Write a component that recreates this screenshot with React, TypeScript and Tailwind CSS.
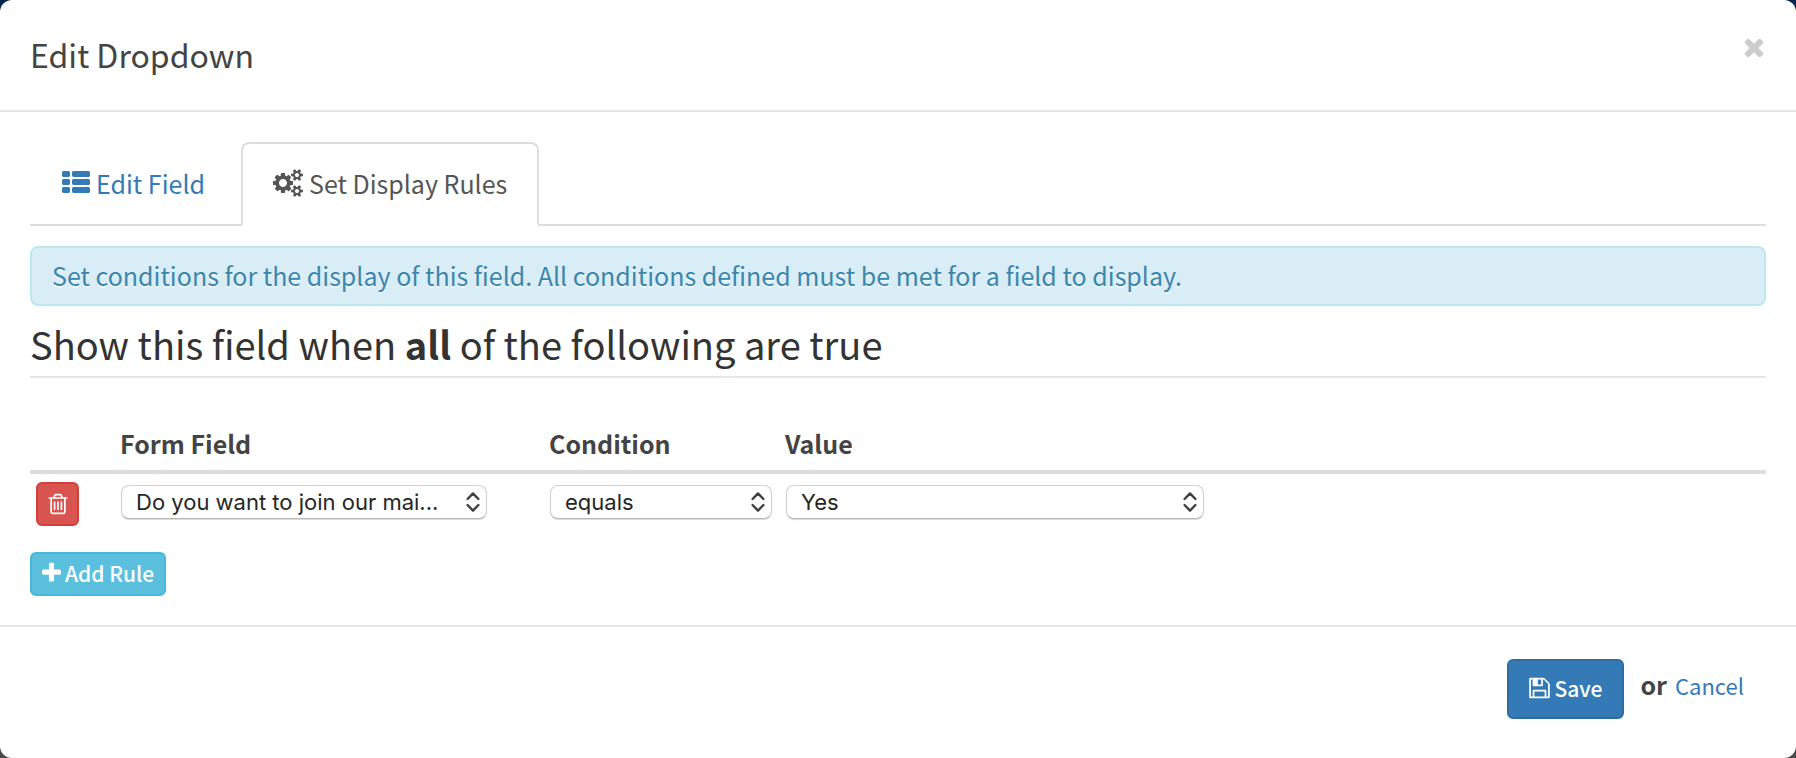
import { useState, type ReactNode } from "react";

type IconProps = {
  path: string;
  className: string;
  viewBox?: string;
};

const ICONS = {
  list: "M512 1248v192q0 40-28 68t-68 28h-320q-40 0-68-28t-28-68v-192q0-40 28-68t68-28h320q40 0 68 28t28 68zm0-512v192q0 40-28 68t-68 28h-320q-40 0-68-28t-28-68v-192q0-40 28-68t68-28h320q40 0 68 28t28 68zm1280 512v192q0 40-28 68t-68 28h-960q-40 0-68-28t-28-68v-192q0-40 28-68t68-28h960q40 0 68 28t28 68zm-1280-1024v192q0 40-28 68t-68 28h-320q-40 0-68-28t-28-68v-192q0-40 28-68t68-28h320q40 0 68 28t28 68zm1280 512v192q0 40-28 68t-68 28h-960q-40 0-68-28t-28-68v-192q0-40 28-68t68-28h960q40 0 68 28t28 68zm0-512v192q0 40-28 68t-68 28h-960q-40 0-68-28t-28-68v-192q0-40 28-68t68-28h960q40 0 68 28t28 68z",
  cogs: "M896 896q0-106-75-181t-181-75-181 75-75 181 75 181 181 75 181-75 75-181zm768 512q0-52-38-90t-90-38-90 38-38 90q0 53 37.5 90.5t90.5 37.5 90.5-37.5 37.5-90.5zm0-1024q0-52-38-90t-90-38-90 38-38 90q0 53 37.5 90.5t90.5 37.5 90.5-37.5 37.5-90.5zm-384 421v185q0 10-7 19.5t-16 10.5l-155 24q-11 35-32 76 34 48 90 115 7 11 7 20 0 12-7 19-23 30-82.5 89.5t-78.5 59.5q-11 0-21-7l-115-90q-37 19-77 31-11 108-23 155-7 24-30 24h-186q-11 0-20-7.5t-10-17.5l-23-153q-34-10-75-31l-118 89q-7 7-20 7-11 0-21-8-144-133-144-160 0-9 7-19 10-14 41-53t47-61q-23-44-35-82l-152-24q-10-1-17-9.5t-7-19.5v-185q0-10 7-19.5t16-10.5l155-24q11-35 32-76-34-48-90-115-7-11-7-20 0-12 7-20 22-30 82-89t79-59q11 0 21 7l115 90q34-18 77-32 11-108 23-154 7-24 30-24h186q11 0 20 7.5t10 17.5l23 153q34 10 75 31l118-89q8-7 20-7 11 0 21 8 144 133 144 160 0 8-7 19-12 16-42 54t-45 60q23 48 34 82l152 23q10 2 17 10.5t7 19.5zm640 533v140q0 16-149 31-12 27-30 52 51 113 51 138 0 4-4 7-122 71-124 71-8 0-46-47t-52-68q-20 2-30 2t-30-2q-14 21-52 68t-46 47q-2 0-124-71-4-3-4-7 0-25 51-138-18-25-30-52-149-15-149-31v-140q0-16 149-31 13-29 30-52-51-113-51-138 0-4 4-7 4-2 35-20t59-34 30-16q8 0 46 46.5t52 67.5q20-2 30-2t30 2q51-71 92-112l6-2q4 0 124 70 4 3 4 7 0 25-51 138 17 23 30 52 149 15 149 31zm0-1024v140q0 16-149 31-12 27-30 52 51 113 51 138 0 4-4 7-122 71-124 71-8 0-46-47t-52-68q-20 2-30 2t-30-2q-14 21-52 68t-46 47q-2 0-124-71-4-3-4-7 0-25 51-138-18-25-30-52-149-15-149-31v-140q0-16 149-31 13-29 30-52-51-113-51-138 0-4 4-7 4-2 35-20t59-34 30-16q8 0 46 46.5t52 67.5q20-2 30-2t30 2q51-71 92-112l6-2q4 0 124 70 4 3 4 7 0 25-51 138 17 23 30 52 149 15 149 31z",
  trash: "M704 736v576q0 14-9 23t-23 9h-64q-14 0-23-9t-9-23v-576q0-14 9-23t23-9h64q14 0 23 9t9 23zm256 0v576q0 14-9 23t-23 9h-64q-14 0-23-9t-9-23v-576q0-14 9-23t23-9h64q14 0 23 9t9 23zm256 0v576q0 14-9 23t-23 9h-64q-14 0-23-9t-9-23v-576q0-14 9-23t23-9h64q14 0 23 9t9 23zm128 724v-948h-896v948q0 22 7 40.5t14.5 27 10.5 8.5h832q3 0 10.5-8.5t14.5-27 7-40.5zm-672-1076h448l-48-117q-7-9-17-11h-317q-10 2-17 11zm928 32v64q0 14-9 23t-23 9h-96v948q0 83-47 143.5t-113 60.5h-832q-66 0-113-58.5t-47-141.5v-952h-96q-14 0-23-9t-9-23v-64q0-14 9-23t23-9h309l70-167q15-37 54-63t79-26h320q40 0 79 26t54 63l70 167h309q14 0 23 9t9 23z",
  plus: "M1600 736v192q0 40-28 68t-68 28h-416v416q0 40-28 68t-68 28h-192q-40 0-68-28t-28-68v-416h-416q-40 0-68-28t-28-68v-192q0-40 28-68t68-28h416v-416q0-40 28-68t68-28h192q40 0 68 28t28 68v416h416q40 0 68 28t28 68z",
  save: "M512 1536h768v-384h-768v384zm896 0h128v-896q0-14-10-38.5t-20-34.5l-281-281q-10-10-34-20t-39-10v416q0 40-28 68t-68 28h-576q-40 0-68-28t-28-68v-416h-128v1280h128v-416q0-40 28-68t68-28h832q40 0 68 28t28 68v416zm-384-928v-320q0-13-9.5-22.5t-22.5-9.5h-192q-13 0-22.5 9.5t-9.5 22.5v320q0 13 9.5 22.5t22.5 9.5h192q13 0 22.5-9.5t9.5-22.5zm640 32v928q0 40-28 68t-68 28h-1344q-40 0-68-28t-28-68v-1344q0-40 28-68t68-28h928q40 0 88 20t76 48l280 280q28 28 48 76t20 88z",
  times: "M1490 1322q0 40-28 68l-136 136q-28 28-68 28t-68-28l-294-294-294 294q-28 28-68 28t-68-28l-136-136q-28-28-28-68t28-68l294-294-294-294q-28-28-28-68t28-68l136-136q28-28 68-28t68 28l294 294 294-294q28-28 68-28t68 28l136 136q28 28 28 68t-28 68l-294 294 294 294q28 28 28 68z"
};

function Icon({ path, className, viewBox = "0 0 1792 1792" }: IconProps) {
  return (
    <svg viewBox={viewBox} fill="currentColor" aria-hidden="true" className={className}>
      <path d={path} />
    </svg>
  );
}

type Rule = {
  id: number;
  field: string;
  condition: string;
  value: string;
};

const FIELD_OPTIONS = ["Do you want to join our mai..."];
const CONDITION_OPTIONS = ["equals", "does not equal"];
const VALUE_OPTIONS = ["Yes", "No"];

type RuleSelectProps = {
  label: string;
  value: string;
  options: string[];
  className: string;
  onChange: (value: string) => void;
};

function RuleSelect({ label, value, options, className, onChange }: RuleSelectProps) {
  return (
    <div className={`relative ${className}`}>
      <select
        aria-label={label}
        value={value}
        onChange={(event) => onChange(event.target.value)}
        className="block h-[34px] w-full appearance-none rounded-lg border border-[#d2d2d2] border-b-[#b8b8b8] bg-white pr-9 pl-3.5 font-[Inter,sans-serif] text-[22px] leading-7 text-[#262626] shadow-[0_1px_1px_rgba(0,0,0,0.15)]"
      >
        {options.map((option) => <option key={option}>{option}</option>)}
      </select>
      <svg
        viewBox="0 0 14 20"
        fill="none"
        stroke="#404040"
        strokeWidth="2.4"
        strokeLinecap="round"
        strokeLinejoin="round"
        aria-hidden="true"
        className="pointer-events-none absolute top-[7px] right-[7px] h-5 w-3.5"
      >
        <path d="M1.6 7 7 1.4 12.4 7M1.6 13 7 18.6 12.4 13" />
      </svg>
    </div>
  );
}

function HeaderCell({ children }: { children?: ReactNode }) {
  return <th className="pb-[9px] text-left text-[25px] leading-9 font-bold">{children}</th>;
}

export default function App() {
  const [tab, setTab] = useState<"field" | "rules">("rules");
  const [rules, setRules] = useState<Rule[]>([
    { id: 1, field: FIELD_OPTIONS[0], condition: "equals", value: "Yes" }
  ]);

  const updateRule = (id: number, patch: Partial<Rule>) => {
    setRules((current) => current.map((rule) => (rule.id === id ? { ...rule, ...patch } : rule)));
  };

  const addRule = () => {
    setRules((current) => [...current, { id: Date.now(), field: FIELD_OPTIONS[0], condition: "equals", value: "Yes" }]);
  };

  const tabClass = (active: boolean) =>
    active
      ? "-mb-0.5 flex items-center gap-1.5 rounded-t-lg border-2 border-[#ddd] border-b-white bg-white px-[30px] pt-[21px] pb-[23px] text-[#555]"
      : "-mb-0.5 flex items-center gap-1.5 rounded-t-lg border-2 border-transparent px-[30px] pt-[21px] pb-[23px] text-[#337ab7]";

  return (
    <div className="flex min-h-screen flex-col bg-linear-to-b from-[#05264f] from-50% to-[#4a4a4a] to-50% font-['Noto_Sans_CJK_SC',sans-serif] text-[#444]">
      <div role="dialog" aria-labelledby="dialog-title" className="flex-1 rounded-xl bg-white">
        <header className="flex items-start justify-between border-b-2 border-[#e5e5e5] px-[30px] pt-[30px] pb-8">
          <h4 id="dialog-title" className="text-[32px] leading-[48px]">Edit Dropdown</h4>
          <button type="button" aria-label="Close" className="pt-[3px] text-[#ccc]">
            <Icon path={ICONS.times} className="h-7 w-6" viewBox="224 0 1344 1792" />
          </button>
        </header>

        <main className="px-[30px] pt-[30px] pb-[29px]">
          <div role="tablist" className="flex gap-1 border-b-2 border-[#ddd] text-[25px] leading-9">
            <button type="button" role="tab" aria-selected={tab === "field"} onClick={() => setTab("field")} className={tabClass(tab === "field")}>
              <Icon path={ICONS.list} className="size-7" />
              Edit Field
            </button>
            <button type="button" role="tab" aria-selected={tab === "rules"} onClick={() => setTab("rules")} className={tabClass(tab === "rules")}>
              <Icon path={ICONS.cogs} className="h-7 w-[30px]" viewBox="0 0 1920 1792" />
              Set Display Rules
            </button>
          </div>

          <div className="mt-5 rounded-lg border-2 border-[#bce8f1] bg-[#d9edf7] px-5 pt-[9px] pb-[11px] text-[25px] leading-9 text-[#3a87ad] [text-shadow:0_2px_0_rgba(255,255,255,0.5)]">
            Set conditions for the display of this field. All conditions defined must be met for a field to display.
          </div>

          <h3 className="mt-[11px] border-b-2 border-[#e5e5e5] pb-[5px] text-[38px] leading-[54px] text-[#333]">
            Show this field when <b>all</b> of the following are true
          </h3>

          <table className="mt-[47px] w-full table-fixed border-collapse">
            <colgroup>
              <col className="w-[90px]" />
              <col className="w-[429px]" />
              <col className="w-[236px]" />
              <col />
            </colgroup>
            <thead>
              <tr className="border-b-4 border-[#ddd]">
                <td />
                <HeaderCell>Form Field</HeaderCell>
                <HeaderCell>Condition</HeaderCell>
                <HeaderCell>Value</HeaderCell>
              </tr>
            </thead>
            <tbody>
              {rules.map((rule) => (
                <tr key={rule.id} className="align-top">
                  <td className="pt-2 pl-1.5">
                    <button
                      type="button"
                      aria-label="Delete rule"
                      onClick={() => setRules((current) => current.filter((item) => item.id !== rule.id))}
                      className="flex h-11 w-[43px] items-center justify-center rounded-md border-2 border-[#d43f3a] bg-[#d9534f] text-white"
                    >
                      <Icon path={ICONS.trash} className="size-6" />
                    </button>
                  </td>
                  <td className="pt-[11px] pl-px">
                    <RuleSelect label="Form Field" value={rule.field} options={FIELD_OPTIONS} className="w-[366px]" onChange={(field) => updateRule(rule.id, { field })} />
                  </td>
                  <td className="pt-[11px] pl-px">
                    <RuleSelect label="Condition" value={rule.condition} options={CONDITION_OPTIONS} className="w-[222px]" onChange={(condition) => updateRule(rule.id, { condition })} />
                  </td>
                  <td className="pt-[11px] pl-px">
                    <RuleSelect label="Value" value={rule.value} options={VALUE_OPTIONS} className="w-[418px]" onChange={(value) => updateRule(rule.id, { value })} />
                  </td>
                </tr>
              ))}
            </tbody>
          </table>

          <button
            type="button"
            onClick={addRule}
            className="mt-[26px] flex h-11 items-center gap-1 rounded-md border-2 border-[#46b8da] bg-[#5bc0de] px-2.5 pb-[3px] text-[21px] leading-8 font-medium text-white"
          >
            <Icon path={ICONS.plus} className="h-6 w-[19px]" viewBox="192 0 1408 1792" />
            Add Rule
          </button>
        </main>

        <footer className="flex items-start justify-end border-t-2 border-[#e5e5e5] px-[52px] pt-8 pb-8">
          <button type="submit" className="flex h-[60px] items-center gap-1 rounded-md border-2 border-[#2e6da4] bg-[#337ab7] px-5 pb-0.5 text-[21px] leading-8 font-medium text-white">
            <Icon path={ICONS.save} className="h-6 w-[21px]" viewBox="128 0 1536 1792" />
            Save
          </button>
          <span className="ml-4 flex items-baseline gap-2 pt-[7px]">
            <b className="text-[25px] leading-9">or</b>
            <a href="#" className="text-[22px] leading-9 text-[#337ab7]">Cancel</a>
          </span>
        </footer>
      </div>
    </div>
  );
}
